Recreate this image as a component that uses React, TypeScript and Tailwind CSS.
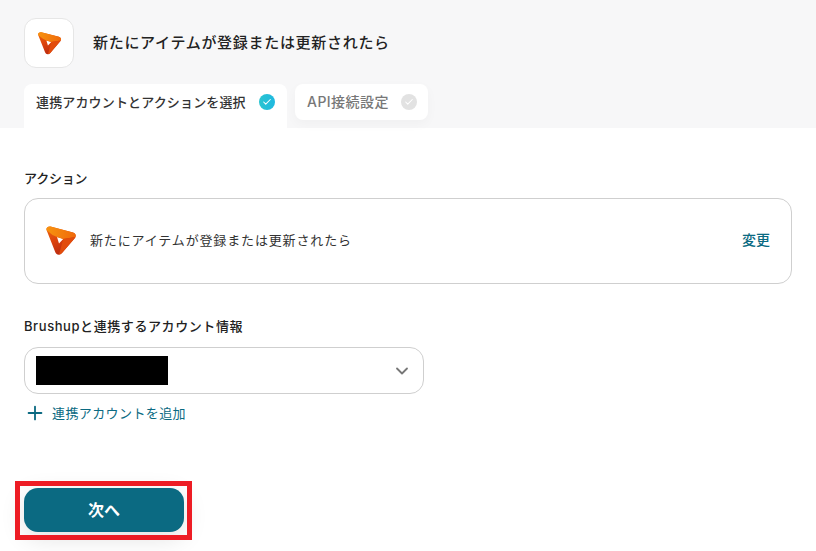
import { Check, ChevronDown, Plus } from "lucide-react";

const jp = "font-['Inter','Noto_Sans_CJK_JP',sans-serif]";

function Logo({ size, id }: { size: number; id: string }) {
  return (
    <svg width={size} height={size} viewBox="0 0 32 32" fill="none">
      <defs>
        <linearGradient id={id} x1="2" y1="2" x2="14" y2="31" gradientUnits="userSpaceOnUse">
          <stop offset="0" stopColor="#ee6a0e" />
          <stop offset="0.5" stopColor="#dc420d" />
          <stop offset="1" stopColor="#b82a10" />
        </linearGradient>
        <linearGradient id={`${id}-top`} x1="2" y1="4" x2="31" y2="10" gradientUnits="userSpaceOnUse">
          <stop offset="0" stopColor="#f7920f" />
          <stop offset="1" stopColor="#ef6a0c" />
        </linearGradient>
      </defs>
      <path
        fillRule="evenodd"
        d="M1.5 5C1 2.5 3 1.2 5.5 1.5L28 7.5C31 8.5 31.5 11.5 29.5 13.5L17 28C14.5 30.5 11.5 30.3 10.3 27.3ZM12 12L14 18.4L18.2 14Z"
        fill={`url(#${id})`}
      />
      <path
        d="M1.5 5C1 2.5 3 1.2 5.5 1.5L28 7.5C30.5 8.3 31.3 10.3 30.5 12L18.2 14L12 12L7.5 10Z"
        fill={`url(#${id}-top)`}
      />
      <path d="M18.2 14L30.5 12C30.3 12.5 30 13 29.5 13.5L17 28C16 29 15 29.5 14 29.7Z" fill="#e24c0c" />
    </svg>
  );
}

export default function App() {
  return (
    <div className={`relative h-[551px] w-[816px] overflow-hidden bg-white text-[#2a2a2a] ${jp}`}>
      <div className="h-[128px] bg-[#f7f7f8] px-6 pt-[18px]">
        <div className="flex items-center gap-[19px]">
          <div className="flex h-[50px] w-[50px] items-center justify-center rounded-xl border border-[#e6e6e6] bg-white">
            <Logo size={25} id="logo-head" />
          </div>
          <h1 className="text-[15px] font-medium tracking-[0.7px] text-[#222]">新たにアイテムが登録または更新されたら</h1>
        </div>
        <div className="mt-4 flex items-start gap-2">
          <div className="flex h-11 w-[263px] items-start gap-[13px] rounded-t-lg bg-white pl-3 pt-[7px]">
            <span className="text-[13px] leading-[22px] font-medium tracking-[0.15px] text-[#333]">連携アカウントとアクションを選択</span>
            <span className="mt-[3px] flex h-4 w-4 items-center justify-center rounded-full bg-gradient-to-r from-[#2ac4d0] to-[#1fb8e0]">
              <Check className="h-2.5 w-2.5 text-white" strokeWidth={2.5} />
            </span>
          </div>
          <div className="flex h-9 w-[133px] items-start gap-[12px] rounded-lg bg-white pl-3 pt-[7px] shadow-[0_4px_12px_rgba(0,0,0,0.03)]">
            <span className="text-[14px] leading-[22px] font-medium tracking-[0.45px] text-[#777]">API接続設定</span>
            <span className="mt-[3px] flex h-4 w-4 items-center justify-center rounded-full bg-[#e2e2e2]">
              <Check className="h-2.5 w-2.5 text-white" strokeWidth={2.5} />
            </span>
          </div>
        </div>
      </div>

      <div className="px-6 pt-[39px]">
        <div className="text-[13px] leading-[22px] font-medium tracking-[-0.2px] text-[#222]">アクション</div>
        <div className="mt-[9px] flex h-[86px] w-[768px] items-center rounded-[14px] border border-[#cfcfcf] pr-[21px] pl-[20px]">
          <Logo size={32} id="logo-card" />
          <span className="ml-[13px] flex-1 text-[13px] tracking-[0.85px] text-[#333]">新たにアイテムが登録または更新されたら</span>
          <button className="mb-[4px] text-[14px] font-medium text-[#0b6a82]">変更</button>
        </div>

        <div className="mt-[31px] text-[13px] leading-[22px] font-medium tracking-[0.58px] text-[#222]">Brushupと連携するアカウント情報</div>
        <div className="mt-[10px] flex h-[47px] w-[400px] items-center justify-between rounded-[14px] border border-[#cfcfcf] pr-[11px] pl-[11px]">
          <div className="h-[29px] w-[132px] bg-black" />
          <ChevronDown className="h-5 w-5 text-[#777]" strokeWidth={2.2} />
        </div>
        <div className="mt-[8px] flex items-center gap-[6px] text-[#0b6a82]">
          <Plus className="h-[22px] w-[22px]" strokeWidth={2} />
          <span className="text-[13px] leading-[22px] tracking-[0.4px]">連携アカウントを追加</span>
        </div>

        <button className="mt-[64px] flex h-11 w-40 items-center justify-center rounded-[14px] bg-[#0b6a82] text-[16px] font-bold text-white shadow-[0_6px_24px_rgba(0,0,0,0.12)]">
          次へ
        </button>
      </div>

      {/* red highlight drawn over the page */}
      <div className="absolute top-[481px] left-[15px] h-[59px] w-[177px] border-[5px] border-[#ed1c24]" />
    </div>
  );
}
